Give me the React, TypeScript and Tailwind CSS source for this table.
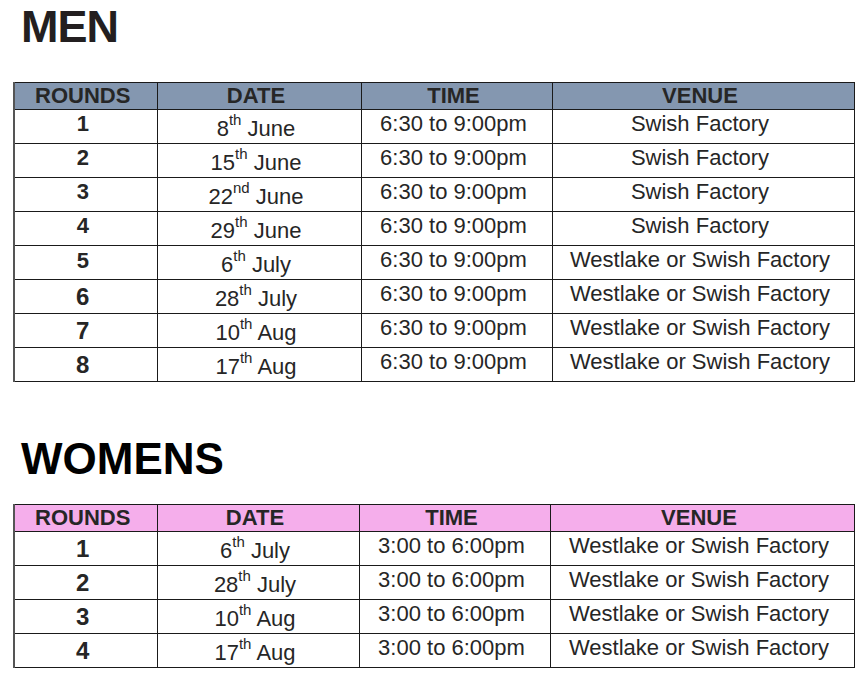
import React from "react";

type Row = { n: string; nCls: string; d: string; sup: string; m: string; t: string; v: string };

const men: Row[] = [
  { n: "1", nCls: "text-[21px] pt-[1px]", d: "8", sup: "th", m: "June", t: "6:30 to 9:00pm", v: "Swish Factory" },
  { n: "2", nCls: "text-[21px] pt-[1px]", d: "15", sup: "th", m: "June", t: "6:30 to 9:00pm", v: "Swish Factory" },
  { n: "3", nCls: "text-[21px] pt-[1px]", d: "22", sup: "nd", m: "June", t: "6:30 to 9:00pm", v: "Swish Factory" },
  { n: "4", nCls: "text-[21px] pt-[1px]", d: "29", sup: "th", m: "June", t: "6:30 to 9:00pm", v: "Swish Factory" },
  { n: "5", nCls: "text-[18px] pt-[2px]", d: "6", sup: "th", m: "July", t: "6:30 to 9:00pm", v: "Westlake or Swish Factory" },
  { n: "6", nCls: "text-[24px] pt-[4px]", d: "28", sup: "th", m: "July", t: "6:30 to 9:00pm", v: "Westlake or Swish Factory" },
  { n: "7", nCls: "text-[24px] pt-[4px]", d: "10", sup: "th", m: "Aug", t: "6:30 to 9:00pm", v: "Westlake or Swish Factory" },
  { n: "8", nCls: "text-[24px] pt-[4px]", d: "17", sup: "th", m: "Aug", t: "6:30 to 9:00pm", v: "Westlake or Swish Factory" },
];

const women: Row[] = [
  { n: "1", nCls: "text-[24px] pt-[4px]", d: "6", sup: "th", m: "July", t: "3:00 to 6:00pm", v: "Westlake or Swish Factory" },
  { n: "2", nCls: "text-[24px] pt-[4px]", d: "28", sup: "th", m: "July", t: "3:00 to 6:00pm", v: "Westlake or Swish Factory" },
  { n: "3", nCls: "text-[24px] pt-[4px]", d: "10", sup: "th", m: "Aug", t: "3:00 to 6:00pm", v: "Westlake or Swish Factory" },
  { n: "4", nCls: "text-[24px] pt-[4px]", d: "17", sup: "th", m: "Aug", t: "3:00 to 6:00pm", v: "Westlake or Swish Factory" },
];

function Schedule({ rows, headBg, widths }: { rows: Row[]; headBg: string; widths: number[] }) {
  const th = "border border-[#1a1a1a] text-center align-top font-bold text-[22px] leading-[26px] h-[26px] pr-[6px] text-[#262626]";
  const td = "border border-[#1a1a1a] text-center align-top text-[22px] leading-[25px] pr-[6px] text-[#262626] whitespace-nowrap";
  return (
    <table className="ml-[13px] border-collapse table-fixed w-[840px] border-l-2 border-l-[#555]">
      <colgroup>
        {widths.map((w, i) => (
          <col key={i} style={{ width: w }} />
        ))}
      </colgroup>
      <thead>
        <tr className={headBg}>
          <th className={th}>ROUNDS</th>
          <th className={th}>DATE</th>
          <th className={th}>TIME</th>
          <th className={th}>VENUE</th>
        </tr>
      </thead>
      <tbody>
        {rows.map((r) => (
          <tr key={r.n} className="h-[34px] bg-white">
            <td className={`${td} font-bold leading-[25px] ${r.nCls}`}>{r.n}</td>
            <td className={`${td} pt-[6px]`}>
              {r.d}
              <span className="relative -top-[11px] text-[15px]">{r.sup}</span> {r.m}
            </td>
            <td className={`${td} pt-[1px]`}>{r.t}</td>
            <td className={`${td} pt-[1px]`}>{r.v}</td>
          </tr>
        ))}
      </tbody>
    </table>
  );
}

export default function App() {
  return (
    <div className="w-[865px] h-[678px] bg-white overflow-hidden" style={{ fontFamily: '"Liberation Sans", Arial, sans-serif' }}>
      <h1 className="ml-[21px] mt-[4px] text-[45px] leading-[45px] font-bold tracking-[-1px] text-[#231f20]">MEN</h1>
      <div className="mt-[33px]">
        <Schedule rows={men} headBg="bg-[#8497b0]" widths={[143, 204, 191, 302]} />
      </div>
      <h1 className="ml-[21px] mt-[55px] text-[44px] leading-[44px] font-bold text-black">WOMENS</h1>
      <div className="mt-[23px]">
        <Schedule rows={women} headBg="bg-[#f5aeeb]" widths={[143, 202, 191, 304]} />
      </div>
    </div>
  );
}
